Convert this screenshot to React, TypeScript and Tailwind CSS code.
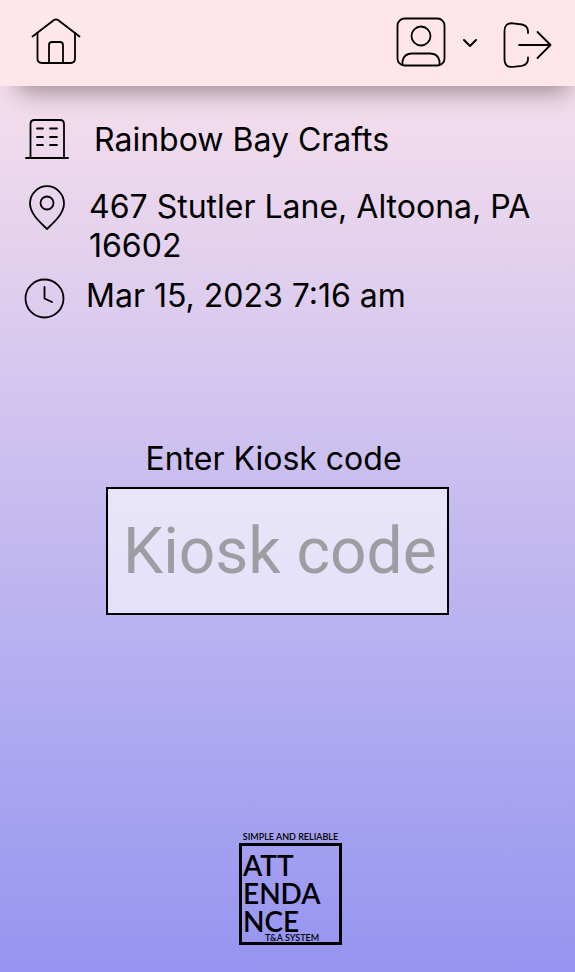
import type { ReactNode, SVGProps } from "react";

function Icon({ children, ...props }: SVGProps<SVGSVGElement> & { children: ReactNode }) {
  return (
    <svg
      fill="none"
      stroke="currentColor"
      strokeWidth="1.8"
      strokeLinecap="round"
      strokeLinejoin="round"
      aria-hidden="true"
      {...props}
    >
      {children}
    </svg>
  );
}

function Header() {
  return (
    <header className="flex h-[86px] items-center justify-between bg-[#ffe6eb] pr-[21px] pb-0.5 pl-[30px] shadow-[6px_18px_24px_-12px_rgba(0,0,0,0.38)]">
      <a href="#home" aria-label="Home">
        <Icon className="h-[50px] w-[52px]" viewBox="0 0 52 50">
          <path d="M2.500 19.500 24 3Q26 1.800 28 3L49.500 19.500" />
          <path d="M7.500 16V41.500Q7.500 46 12 46H40.500Q45 46 45 41.500V16" />
          <path d="M19 46V28Q19 25 22 25H30Q33 25 33 28V46" />
        </Icon>
      </a>
      <div className="flex items-center">
        <button type="button" aria-label="Account" className="flex items-center gap-4">
          <Icon className="size-[50px]" viewBox="0 0 50 50">
            <rect x="1.500" y="1.500" width="47" height="47" rx="7" />
            <circle cx="25" cy="19" r="9.500" />
            <path d="M6.500 47V44Q8 36.500 16 36.500H34Q42 36.500 43.500 44V47" />
          </Icon>
          <Icon className="h-[50px] w-4" viewBox="0 0 16 50" strokeWidth="2">
            <path d="M2 23 8 29 14 23" />
          </Icon>
        </button>
        <button type="button" aria-label="Sign out" className="ml-6">
          <Icon className="h-[52px] w-[52px]" viewBox="0 0 52 52">
            <path d="M26 17V15Q25.500 9.500 20 8.500L11 7.300Q2.500 6.500 2.500 15V43Q2.500 52 11 50.800L20 49.800Q26 48.500 26 43V41.500" />
            <path d="M17 29H48.500M35.500 16 48.500 29 35.500 42" />
          </Icon>
        </button>
      </div>
    </header>
  );
}

function Details() {
  return (
    <ul className="px-6 pt-8 text-[32px] leading-[39px]">
      <li className="flex items-start gap-6">
        <Icon className="h-[42px] w-[46px] shrink-0" viewBox="0 0 46 42">
          <path d="M2 40H44M6.500 40V6Q6.500 2 10.500 2H36Q40 2 40 6V40" />
          <path d="M13 10.500H19M26 10.500H33M13 19H19M26 19H33M13 27H19M26 27H33" />
        </Icon>
        <span className="pt-0.5">Rainbow Bay Crafts</span>
      </li>
      <li className="mt-[25px] flex items-start gap-[19px]">
        <Icon className="h-[46px] w-[46px] shrink-0" viewBox="0 0 46 46">
          <path d="M23 44C17 38 6 29 6 18.500A17 17.300 0 0 1 40 18.500C40 29 29 38 23 44Z" />
          <circle cx="23" cy="18" r="6.500" />
        </Icon>
        <address className="pt-0.5 not-italic">467 Stutler Lane, Altoona, PA 16602</address>
      </li>
      <li className="mt-[11px] flex items-start gap-5">
        <Icon className="h-[44px] w-[42px] shrink-0" viewBox="0 0 42 44">
          <circle cx="20.500" cy="22.500" r="19" />
          <path d="M20.500 11V22.500L28 26" />
        </Icon>
        <time dateTime="2023-03-15T07:16">Mar 15, 2023 7:16 am</time>
      </li>
    </ul>
  );
}

function KioskForm() {
  return (
    <form className="mt-[119px] flex flex-col items-center pr-5">
      <label htmlFor="kiosk-code" className="pr-2 text-[32px] leading-[39px]">
        Enter Kiosk code
      </label>
      <input
        id="kiosk-code"
        type="text"
        placeholder="Kiosk code"
        className="mt-[9px] h-32 w-[343px] border-2 border-black bg-white/60 pl-[15px] font-[Roboto,sans-serif] text-[64px] placeholder:text-[#9e9da2]"
      />
    </form>
  );
}

function Logo() {
  return (
    <footer className="mt-auto flex flex-col items-center pb-[27px] pl-1.5 font-[Lato,sans-serif] font-semibold">
      <p className="text-[9px] leading-3">SIMPLE AND RELIABLE</p>
      <div className="h-[102px] w-[103px] border-3 border-black pt-[5px] pl-px">
        <p className="text-[28px] leading-7">
          ATT
          <br />
          ENDA
          <br />
          NCE
        </p>
        <p className="pl-[22px] text-[9px] leading-1.5">T&amp;A SYSTEM</p>
      </div>
    </footer>
  );
}

export default function App() {
  return (
    <div className="flex min-h-screen flex-col bg-linear-to-b from-[#ffe5ea] to-[#9694f0] font-[Inter,sans-serif] text-black">
      <Header />
      <main>
        <Details />
        <KioskForm />
      </main>
      <Logo />
    </div>
  );
}
